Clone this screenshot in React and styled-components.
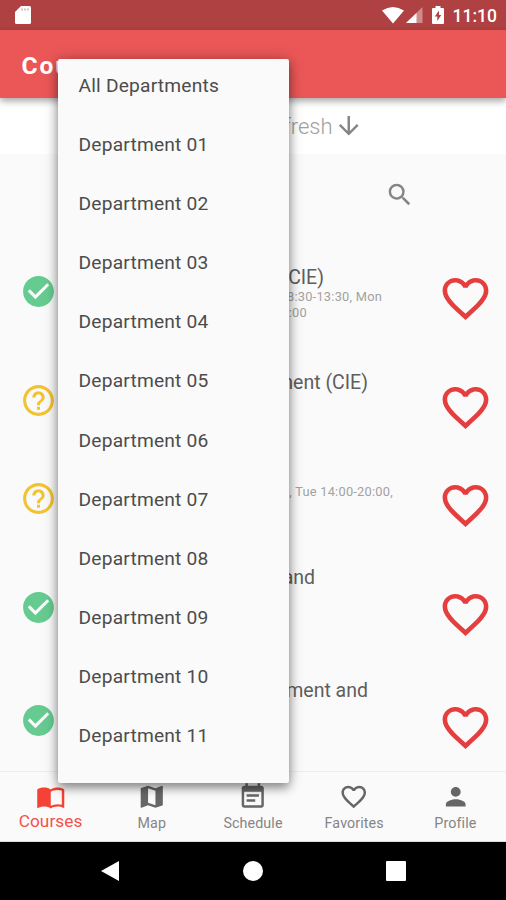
import React from "react";
import styled, { createGlobalStyle } from "styled-components";
import {
  MdArrowDownward,
  MdCheckCircle,
  MdEventNote,
  MdFavoriteBorder,
  MdHelpOutline,
  MdImportContacts,
  MdMap,
  MdPerson,
  MdSearch,
} from "react-icons/md";

const GlobalStyle = createGlobalStyle`
  * { box-sizing: border-box; }
  body { margin: 0; background: #000; font-family: Roboto, "Liberation Sans", sans-serif; }
  svg { display: block; flex: none; }
`;

const Screen = styled.div`
  position: relative;
  display: flex;
  flex-direction: column;
  width: 506px;
  height: 900px;
  overflow: hidden;
  background: #fafafa;
`;

const StatusBar = styled.header`
  display: flex;
  align-items: center;
  justify-content: space-between;
  height: 30px;
  flex: none;
  padding: 0 9px 0 14px;
  background: #b04142;
  color: #fff;
`;

const StatusIcons = styled.div`
  display: flex;
  align-items: center;
`;

const BatterySlot = styled.span`
  margin-left: 8px;
`;

const Clock = styled.time`
  margin-left: 8px;
  padding-top: 1px;
  font-size: 17.5px;
  font-weight: 500;
  line-height: 20px;
`;

const AppBar = styled.div`
  position: relative;
  display: flex;
  align-items: center;
  height: 68px;
  flex: none;
  padding: 3px 21.5px 0;
  background: #eb5757;
  color: #fff;
  box-shadow: 0 3px 7px rgba(0, 0, 0, 0.36);
`;

const Title = styled.h1`
  margin: 0;
  font-size: 24.6px;
  font-weight: 700;
  letter-spacing: 1.9px;
`;

const RefreshHint = styled.div`
  display: flex;
  align-items: center;
  justify-content: flex-end;
  gap: 1px;
  height: 56px;
  flex: none;
  padding-right: 143px;
  background: #fff;
  color: #a0a0a0;
  font-size: 22px;
  font-weight: 300;

  svg { color: #858585; }
`;

const SearchRow = styled.div`
  display: flex;
  align-items: center;
  justify-content: flex-end;
  height: 82px;
  flex: none;
  padding-right: 92px;
  color: #858585;
`;

const CourseList = styled.main`
  flex: 1;
  min-height: 0;
  padding-top: 15px;
  overflow: hidden;
`;

const CourseRow = styled.article`
  display: grid;
  grid-template-columns: 50px 368px 55px;
  align-items: start;
  height: ${(p) => p.$height}px;
  padding-left: 20px;
`;

const StatusIcon = styled.div`
  padding-top: 22px;
  color: ${(p) => (p.$done ? "#66cb90" : "#f2c230")};
`;

const CourseText = styled.div`
  margin-top: ${(p) => p.$top}px;
`;

const CourseName = styled.div`
  width: ${(p) => p.$width}px;
  text-align: right;
  white-space: nowrap;
  color: #5e5e5e;
  font-size: 19.5px;
  line-height: 23px;
`;

const CourseTime = styled.div`
  width: ${(p) => p.$width}px;
  text-align: right;
  white-space: nowrap;
  color: #a2a2a2;
  font-size: 12.8px;
  line-height: 16px;
  letter-spacing: 0.25px;
`;

const FavoriteButton = styled.button`
  padding: 20px 0 0;
  border: 0;
  background: none;
  color: #e53e3f;
`;

const DepartmentMenu = styled.ul`
  position: absolute;
  z-index: 2;
  left: 58px;
  top: 59px;
  width: 231px;
  height: 724px;
  margin: 0;
  padding: 0;
  list-style: none;
  border-radius: 2px;
  background: #fafafa;
  box-shadow: 0 5px 10px rgba(0, 0, 0, 0.34), 0 1px 15px rgba(0, 0, 0, 0.26);
`;

const Department = styled.li`
  display: flex;
  align-items: center;
  height: 59.1px;
  padding-left: 20.5px;
  color: #4c4c4c;
  font-size: 19.2px;
  letter-spacing: 0.2px;

  &:first-child { height: 56px; padding-bottom: 3px; }
`;

const TabBar = styled.nav`
  display: grid;
  grid-template-columns: repeat(5, 1fr);
  height: 71px;
  flex: none;
  border-top: 1px solid #eee;
  border-bottom: 1px solid #ddd;
  background: #fafafa;
`;

const Tab = styled.div`
  display: flex;
  flex-direction: column;
  align-items: center;
  padding-top: 10px;
  color: ${(p) => (p.$active ? "#f44336" : "#666")};
`;

const TabLabel = styled.span`
  margin-top: ${(p) => (p.$active ? "-1px" : "1px")};
  color: ${(p) => (p.$active ? "#f4514a" : "#858585")};
  font-size: ${(p) => (p.$active ? "17.2px" : "14.3px")};
  line-height: 20px;
  letter-spacing: 0.1px;
`;

const SystemBar = styled.footer`
  display: grid;
  grid-template-columns: 20px 20px 20px;
  justify-content: center;
  align-items: center;
  gap: 123px;
  height: 58px;
  flex: none;
  background: #000;
`;

const departments = [
  "All Departments",
  ...Array.from({ length: 11 }, (_, i) => `Department ${String(i + 1).padStart(2, "0")}`),
];

const courses = [
  { done: true, height: 109, top: 15, name: "(CIE)", nameWidth: 254, times: [["8:30-13:30, Mon", 312], [":00", 237]] },
  { done: false, height: 98, top: 11, name: "Department (CIE)", nameWidth: 298, times: [] },
  { done: false, height: 109, top: 26, name: "", nameWidth: 254, times: [[", Tue 14:00-20:00,", 323]] },
  { done: true, height: 113, top: -1, name: "and", nameWidth: 245, times: [] },
  { done: true, height: 109, top: -1, name: "Department and", nameWidth: 298, times: [] },
];

const tabs = [
  { label: "Courses", Icon: MdImportContacts, active: true },
  { label: "Map", Icon: MdMap },
  { label: "Schedule", Icon: MdEventNote },
  { label: "Favorites", Icon: MdFavoriteBorder },
  { label: "Profile", Icon: MdPerson },
];

function SdCardIcon() {
  return (
    <svg width="18" height="20" viewBox="0 0 18 20">
      <path fill="#fff" d="M7 1h8.500q1.500 0 1.500 1.500v15q0 1.500-1.500 1.500h-13Q1 19 1 17.500V7Z" />
      <path d="M8 3.500v2M11 3.500v2M14 3.500v2" stroke="#b04142" strokeWidth="0.700" />
    </svg>
  );
}

function WifiIcon() {
  return (
    <svg width="24" height="18" viewBox="0 0 24 18">
      <path fill="#fff" d="M1 4.500Q12-2.600 23 4.500L12 17.500Z" />
    </svg>
  );
}

function SignalIcon() {
  return (
    <svg width="18" height="18" viewBox="0 0 18 18">
      <path fill="#d08b8b" d="M17.500 1v16H1Z" />
      <path fill="#fff" d="M11.500 7v10H1Z" />
    </svg>
  );
}

function BatteryIcon() {
  return (
    <svg width="14" height="20" viewBox="0 0 14 20">
      <path fill="#fff" d="M4.500 1h5v2H12q1 0 1 1v14q0 1-1 1H2q-1 0-1-1V4q0-1 1-1h2.500Z" />
      <path fill="#b04142" d="M8 5.500 3.800 11.500H6.300V16L10.300 10H8Z" />
    </svg>
  );
}

export default function App() {
  return (
    <>
      <GlobalStyle />
      <Screen>
        <StatusBar>
          <SdCardIcon />
          <StatusIcons>
            <WifiIcon />
            <SignalIcon />
            <BatterySlot><BatteryIcon /></BatterySlot>
            <Clock>11:10</Clock>
          </StatusIcons>
        </StatusBar>
        <AppBar><Title>Courses</Title></AppBar>
        <RefreshHint>
          <span>Refresh</span>
          <MdArrowDownward size={29.5} />
        </RefreshHint>
        <SearchRow><MdSearch size={29.5} /></SearchRow>
        <CourseList>
          {courses.map((course, index) => (
            <CourseRow key={index} $height={course.height}>
              <StatusIcon $done={course.done}>
                {course.done ? <MdCheckCircle size={37} /> : <MdHelpOutline size={37} />}
              </StatusIcon>
              <CourseText $top={course.top}>
                {course.name && <CourseName $width={course.nameWidth}>{course.name}</CourseName>}
                {course.times.map(([text, width]) => (
                  <CourseTime key={text} $width={width}>{text}</CourseTime>
                ))}
              </CourseText>
              <FavoriteButton aria-label="Favorite"><MdFavoriteBorder size={55} /></FavoriteButton>
            </CourseRow>
          ))}
        </CourseList>
        <TabBar>
          {tabs.map(({ label, Icon, active }) => (
            <Tab key={label} $active={active}>
              <Icon size={29.5} />
              <TabLabel $active={active}>{label}</TabLabel>
            </Tab>
          ))}
        </TabBar>
        <SystemBar>
          <svg width="20" height="22" viewBox="0 0 20 22"><path fill="#fff" d="M19 1v20L1 11Z" /></svg>
          <svg width="20" height="20" viewBox="0 0 20 20"><circle cx="10" cy="10" r="10" fill="#fff" /></svg>
          <svg width="20" height="20" viewBox="0 0 20 20"><rect width="20" height="20" rx="1" fill="#fff" /></svg>
        </SystemBar>
        <DepartmentMenu>
          {departments.map((name) => <Department key={name}>{name}</Department>)}
        </DepartmentMenu>
      </Screen>
    </>
  );
}
